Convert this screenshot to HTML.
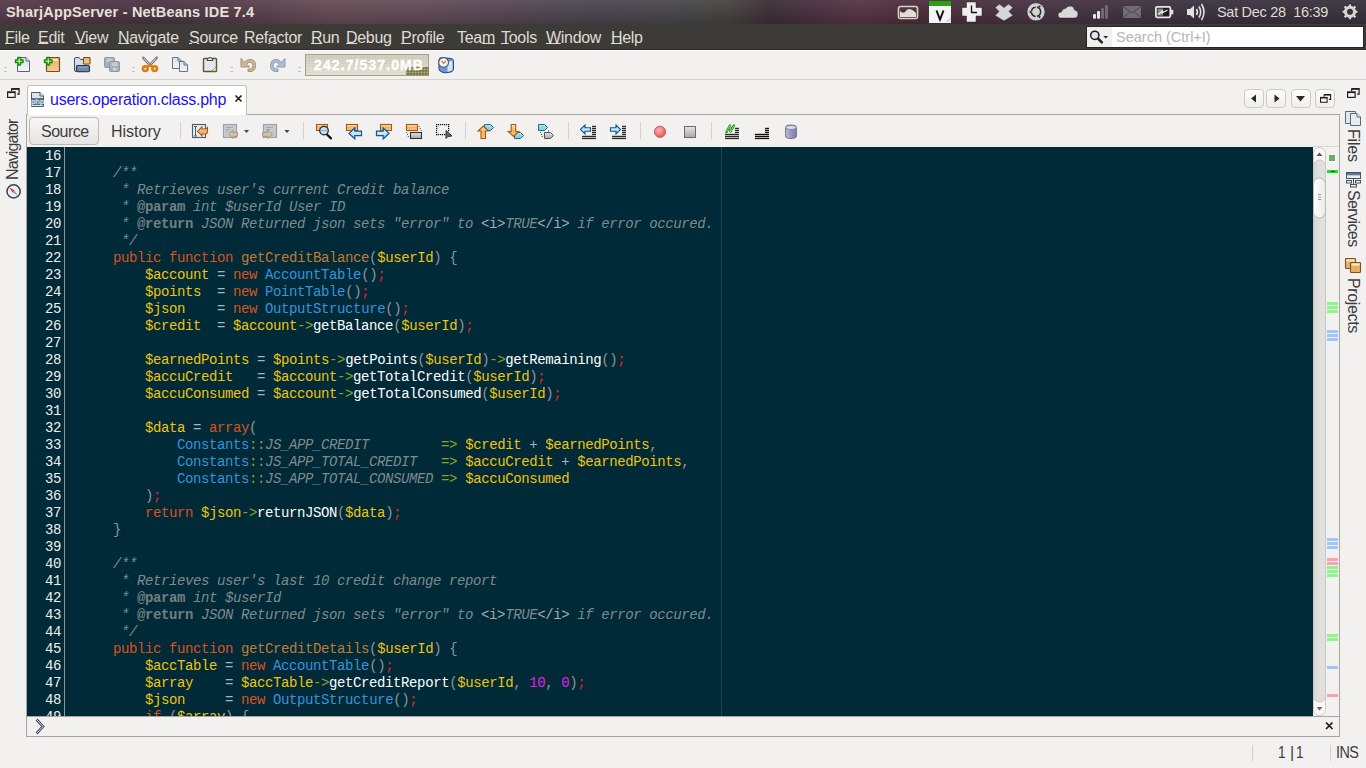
<!DOCTYPE html>
<html><head><meta charset="utf-8">
<style>
*{margin:0;padding:0;box-sizing:border-box}
html,body{width:1366px;height:768px;overflow:hidden;background:#f2f1f0;font-family:"Liberation Sans",sans-serif;position:relative}
.a{position:absolute}
svg{position:absolute;overflow:visible}
#panel{left:0;top:0;width:1366px;height:24px;background:linear-gradient(rgba(255,255,255,0.04),rgba(0,0,0,0.2)),linear-gradient(90deg,#5b3e4d 0px,#553a48 80px,#4d3846 160px,#5a424f 240px,#6a5058 330px,#67505a 420px,#584a57 520px,#4d4a53 600px,#4b4a4b 690px,#4a4644 730px,#3f3139 770px,#4c3442 810px,#5a3747 860px,#50303e 920px,#4a3646 1050px,#3e3542 1200px,#3b3540 1366px)}
#title{left:6px;top:4px;color:#e6e2da;font-weight:bold;font-size:14.5px;letter-spacing:0.2px;white-space:pre}
#clock{left:1217px;top:4px;color:#dfdbd2;font-size:14.5px;letter-spacing:-0.3px;white-space:pre}
#menubar{left:0;top:24px;width:1366px;height:26px;background:#3c3b37;border-bottom:1px solid #2f2e2b}
.mi{position:absolute;top:4.6px;color:#dfdbd2;font-size:16px;letter-spacing:-0.3px;white-space:pre}
.mi u{text-decoration:underline;text-decoration-thickness:1px;text-underline-offset:0px}
#search{left:1086px;top:26px;width:278px;height:22px;background:#fff;border:1px solid #262624}
#search .ib{left:0;top:0;width:25px;height:20px;background:#f0efed}
#search .t{left:29px;top:2px;color:#b9b5ae;font-size:14.5px;white-space:pre}
#toolbar{left:0;top:50px;width:1366px;height:30px;background:#f2f1f0;border-top:1px solid #fbfbfa;border-bottom:1px solid #d6d2cc}
.grip{position:absolute;width:3px;height:5px;border-top:1px solid #c9c5bf;border-bottom:1px solid #c9c5bf}
#mem{left:305px;top:54px;width:124px;height:22px;border:1px solid #a39f8b;background:linear-gradient(90deg,rgba(0,0,0,0.025) 1px,transparent 1px) 0 0/3px 3px,linear-gradient(0deg,rgba(0,0,0,0.025) 1px,transparent 1px) 0 0/3px 3px,linear-gradient(#d2cfbe,#e4e2d4)}
#memfill{left:100px;top:12px;width:23px;height:9px;background-color:#7d7a45;background-image:linear-gradient(90deg,rgba(255,255,255,0.18) 1px,transparent 1px),linear-gradient(0deg,rgba(255,255,255,0.18) 1px,transparent 1px);background-size:3px 3px}
#memt{left:8px;top:2px;-webkit-text-stroke:0.35px #fff;color:#fff;font-weight:bold;font-size:14px;letter-spacing:1.1px;white-space:pre;line-height:16px}
#tab{left:27px;top:85px;width:220px;height:30px;background:#fff;border:1px solid #c4c0b9;border-bottom:none;border-radius:3px 3px 0 0}
#tabt{left:50px;top:91px;color:#2410f4;font-size:16px;letter-spacing:-0.25px;white-space:pre}
.nb{position:absolute;top:89px;width:20px;height:19px;border:1px solid #cfcbc4;border-radius:4px;background:linear-gradient(#fdfdfd,#efeeec)}
#frame{left:26px;top:114px;width:1314px;height:623px;border:1px solid #aaa59e;background:#f2f1f0}
#srcbtn{left:29px;top:117px;width:70px;height:28px;border:1px solid #bdb8b0;border-radius:4px;background:linear-gradient(#f8f7f6,#e6e4e1)}
.et{position:absolute;top:123px;color:#3c3c3c;font-size:16px;letter-spacing:-0.5px;white-space:pre}
.sep{position:absolute;top:122px;width:1px;height:17px;background:#d4d0ca}
#code{left:27px;top:147px;width:1286px;height:569px;background:#002a37;overflow:hidden}
#gut{left:0;top:0;width:38px;height:569px;border-right:1px solid #8f979b}
pre{font-family:"Liberation Mono",monospace;font-size:14px;letter-spacing:-0.4px;line-height:17px;position:absolute;white-space:pre}
#nums{left:0;top:1px;width:34px;text-align:right;color:#eeeeee}
#src{left:54px;top:1px;color:#ccc}
#margin{left:694px;top:0;width:1px;height:569px;background:#2c3f55}
pre i{font-style:normal}
.k{color:#d9521e}.f{color:#c27a34}.v{color:#eec40c}.c{color:#3793dd}.p{color:#8c969a}.s{color:#e0262a}.o{color:#8ea02a}.m{color:#ffffff}.e{color:#a8b4bc}.n{color:#e21fe6}
pre i.cm{color:#7f8a8e;font-style:italic}.cb{color:#737e82;font-weight:bold}.ct{color:#a3aaad}pre i.ci{color:#7f8a8e;font-style:italic}
#sb{left:1313px;top:147px;width:13px;height:569px;background:#f2f1f0}
#stripe{left:1326px;top:147px;width:13px;height:569px;background:#f2f1f0}
.mk{position:absolute;left:1px;width:11px;height:3px}
.g{background:#8cf58c}.b{background:#9ec6f6}.r{background:#fd9fb2}
#bot{left:27px;top:716px;width:1312px;height:20px;border-top:1px solid #aaa59e;background:#f2f1f0}
.st{position:absolute;top:744px;color:#3c3c3c;font-size:16px;letter-spacing:-0.8px;white-space:pre}
.vt{position:absolute;color:#3c3c3c;font-size:16px;white-space:pre;transform-origin:0 0}
</style></head><body>
<div id="panel" class="a"></div>
<div id="title" class="a">SharjAppServer - NetBeans IDE 7.4</div>
<div id="clock" class="a">Sat Dec 28  16:39</div>
<svg class="a" style="left:0;top:0" width="1366" height="24">
<!-- graph -->
<rect x="898.5" y="6.5" width="19" height="12" rx="2" fill="none" stroke="#d9d3c3" stroke-width="1.6"/>
<path d="M900 11 Q903 14 905 12 Q907 9 909 9 Q912 9 916 13 L916 17 L900 17 Z" fill="#e2ddd2"/>
<!-- calendar -->
<rect x="929" y="1" width="22" height="22" fill="#f4f4f4"/>
<rect x="929" y="1" width="22" height="5" fill="#2e9c14"/>
<path d="M936.5 10.5 L940 19.5 L943.5 10.5" fill="none" stroke="#111" stroke-width="2"/>
<path d="M945 22 L951 16 L951 22 Z" fill="#dcdcdc"/>
<!-- plus clock -->
<path d="M966.5 2 H976 V7.5 H982 V16 H976 V22 H966.5 V16 H962 V7.5 H966.5 Z" fill="#efefef" stroke="#222" stroke-width="0.8" stroke-opacity="0.6"/>
<path d="M971.5 5.5 V12.5 H977" fill="none" stroke="#111" stroke-width="1.3"/>
<!-- dropbox -->
<path d="M999.5 4 L1004 7.5 L1008.5 4 L1013 7.5 L1009 11.5 L1013 15.5 L1004 21 L995 15.5 L999 11.5 L995 7.5 Z" fill="#d7d7d7" stroke="#111" stroke-width="0.8" stroke-opacity="0.6"/>
<!-- ubuntu one -->
<circle cx="1036" cy="11.8" r="9" fill="#d2d2d2" stroke="#222" stroke-width="0.8" stroke-opacity="0.6"/>
<circle cx="1036" cy="11.8" r="4.6" fill="none" stroke="#2a2a2a" stroke-width="1.5" stroke-dasharray="6 1.4"/>
<circle cx="1030.5" cy="12" r="1.1" fill="#222"/><circle cx="1039.5" cy="6.5" r="1.1" fill="#222"/><circle cx="1039.5" cy="17" r="1.1" fill="#222"/>
<!-- cloud -->
<path d="M1061 18 Q1058 18 1058 15 Q1058 12 1061.5 12 Q1062 8.5 1065.5 8.5 Q1067 6 1070 6 Q1074 6 1074.5 10 Q1078 10.5 1078 14 Q1078 18 1074.5 18 Z" fill="#d9d9d9" stroke="#111" stroke-width="0.8" stroke-opacity="0.5"/>
<!-- signal -->
<rect x="1093" y="14" width="3" height="4.7" rx="1" fill="#e6e6e6"/>
<rect x="1097" y="11" width="3" height="7.7" rx="1" fill="#e6e6e6"/>
<rect x="1101" y="8" width="3" height="10.7" rx="1" fill="#6e6a70"/>
<rect x="1105" y="5" width="3" height="13.7" rx="1" fill="#6e6a70"/>
<!-- mail -->
<rect x="1123" y="6" width="18" height="12" rx="1" fill="#716c74"/>
<path d="M1123.5 6.5 L1132 13 L1140.5 6.5 M1123.5 17.5 L1129.5 12 M1140.5 17.5 L1134.5 12" fill="none" stroke="#4a454c" stroke-width="1"/>
<!-- battery -->
<rect x="1155.9" y="6.9" width="14.4" height="10.4" rx="1.2" fill="#1e1e1e" stroke="#e8e8e8" stroke-width="1.8"/>
<rect x="1171" y="9.8" width="2.3" height="4.6" fill="#dcdcdc"/>
<rect x="1157.5" y="8.6" width="5.5" height="7" fill="#8a8a8a"/>
<path d="M1158 14.5 L1162.5 11 L1162.5 12.8 L1167.5 10" fill="none" stroke="#f0f0f0" stroke-width="1.2"/>
<!-- volume -->
<path d="M1187 9 H1190 L1194 5.5 V18.5 L1190 15 H1187 Z" fill="#e2e2e2"/>
<path d="M1196.5 9 Q1198.3 12 1196.5 15 M1199 6.5 Q1202.3 12 1199 17.5 M1201.5 4 Q1206.5 12 1201.5 20" fill="none" stroke="#e2e2e2" stroke-width="1.6"/>
<path d="M1356.12 10.32 L1357.88 10.42 L1357.88 13.18 L1356.12 13.28 L1355.82 14.21 L1355.38 15.08 L1356.55 16.40 L1354.60 18.35 L1353.28 17.18 L1352.41 17.62 L1351.48 17.92 L1351.38 19.68 L1348.62 19.68 L1348.52 17.92 L1347.59 17.62 L1346.72 17.18 L1345.40 18.35 L1343.45 16.40 L1344.62 15.08 L1344.18 14.21 L1343.88 13.28 L1342.12 13.18 L1342.12 10.42 L1343.88 10.32 L1344.18 9.39 L1344.62 8.52 L1343.45 7.20 L1345.40 5.25 L1346.72 6.42 L1347.59 5.98 L1348.52 5.68 L1348.62 3.92 L1351.38 3.92 L1351.48 5.68 L1352.41 5.98 L1353.28 6.42 L1354.60 5.25 L1356.55 7.20 L1355.38 8.52 L1355.82 9.39 Z M1347.30 11.80 a2.70 2.70 0 1 0 5.40 0 a2.70 2.70 0 1 0 -5.40 0 Z" fill="#d6d6d6" fill-rule="evenodd" stroke="#111" stroke-width="0.8" stroke-opacity="0.7"/>
</svg>
<div id="menubar" class="a">
<span class="mi" style="left:5px"><u>F</u>ile</span>
<span class="mi" style="left:38px"><u>E</u>dit</span>
<span class="mi" style="left:75px"><u>V</u>iew</span>
<span class="mi" style="left:118px"><u>N</u>avigate</span>
<span class="mi" style="left:189px"><u>S</u>ource</span>
<span class="mi" style="left:244px">Ref<u>a</u>ctor</span>
<span class="mi" style="left:311px"><u>R</u>un</span>
<span class="mi" style="left:346px"><u>D</u>ebug</span>
<span class="mi" style="left:401px"><u>P</u>rofile</span>
<span class="mi" style="left:457px">Tea<u>m</u></span>
<span class="mi" style="left:501px"><u>T</u>ools</span>
<span class="mi" style="left:546px"><u>W</u>indow</span>
<span class="mi" style="left:611px"><u>H</u>elp</span>
</div>
<div id="search" class="a"><div class="ib a"></div><div class="t a">Search (Ctrl+I)</div></div>
<svg class="a" style="left:1087px;top:27px" width="24" height="20">
<path d="M10.8 11.3 L14.8 15.3" stroke="#1e1e1e" stroke-width="2.6" stroke-linecap="round"/>
<circle cx="7.8" cy="8.3" r="4.1" fill="#dde6ee" stroke="#1e1e1e" stroke-width="1.5"/>
<path d="M16.5 9 H21 L18.75 11.5 Z" fill="#1e1e1e"/>
</svg>
<div id="toolbar" class="a"></div>
<div class="grip" style="left:4px;top:67px"></div>
<div class="grip" style="left:132px;top:67px"></div>
<div class="grip" style="left:230px;top:67px"></div>
<div class="grip" style="left:298px;top:67px"></div>
<div id="mem" class="a"><div id="memfill" class="a"></div><div id="memt" class="a">242.7/537.0MB</div></div>
<svg class="a" style="left:0;top:49px" width="470" height="31">
<defs>
<linearGradient id="gdoc" x1="0" y1="0" x2="0" y2="1"><stop offset="0" stop-color="#d8e2ee"/><stop offset="1" stop-color="#f2f5f9"/></linearGradient>
<linearGradient id="gor" x1="0" y1="0" x2="0" y2="1"><stop offset="0" stop-color="#e9ad62"/><stop offset="1" stop-color="#f6cf98"/></linearGradient>
<linearGradient id="gpl" x1="0" y1="0" x2="0" y2="1"><stop offset="0" stop-color="#e6ffd0"/><stop offset="1" stop-color="#a8f070"/></linearGradient>
</defs>
<g transform="translate(0,-49)">
<!-- new file -->
<path d="M17.5 57.5 H26 L29.5 61 V71.5 H17.5 Z" fill="url(#gdoc)" stroke="#5b6673" stroke-width="1"/>
<path d="M26 57.5 V61 H29.5" fill="#eef3f8" stroke="#5b6673" stroke-width="1"/>
<path d="M18 57.5 H20.5 V60 H23 V62.5 H20.5 V65 H18 V62.5 H15.5 V60 H18 Z" fill="url(#gpl)" stroke="#128a06" stroke-width="1.4" stroke-linejoin="round"/>
<!-- new project -->
<rect x="46.5" y="57.5" width="13" height="14" rx="0.8" fill="url(#gor)" stroke="#73501f" stroke-width="1.2"/>
<rect x="48" y="59" width="10" height="2" fill="#fbe6c4"/>
<path d="M47 57.5 H49.5 V60 H52 V62.5 H49.5 V65 H47 V62.5 H44.5 V60 H47 Z" fill="url(#gpl)" stroke="#128a06" stroke-width="1.4" stroke-linejoin="round"/>
<!-- open project -->
<path d="M74.5 59 Q74.5 57.5 76 57.5 H79 L80.5 59.5 H86 V71.5 H76 Q74.5 71.5 74.5 70 Z" fill="#d3dee9" stroke="#3f4d5c" stroke-width="1"/>
<rect x="76.5" y="65.5" width="13" height="6.3" rx="1.2" fill="#6d8aa8" stroke="#23364a" stroke-width="1.1"/><path d="M78 67.2 H88" stroke="#9ab2c8" stroke-width="0.8"/>
<rect x="83.5" y="57.5" width="6.5" height="6.5" rx="0.8" fill="url(#gor)" stroke="#73501f" stroke-width="1.1"/>
<!-- save all disabled -->
<rect x="104.5" y="57.5" width="10" height="10" rx="1" fill="#a6b0b8" stroke="#8e98a0" stroke-width="1"/>
<rect x="106.5" y="58.5" width="6" height="3.5" fill="#c8ccd0"/>
<rect x="109.5" y="61.5" width="10" height="10" rx="1" fill="#a6b0b8" stroke="#8e98a0" stroke-width="1"/>
<rect x="111.5" y="62.5" width="6" height="3.5" fill="#c8ccd0"/>
<rect x="113" y="68" width="3.5" height="2.5" fill="#d0d4d8"/>
<!-- scissors -->
<path d="M143.3 57.8 L150.5 65.5 M156.7 57.8 L149.5 65.5" stroke="#74797e" stroke-width="2.6" stroke-linecap="round"/>
<path d="M143.8 58.2 L150.3 65.2 M156.2 58.2 L149.7 65.2" stroke="#e4e6e8" stroke-width="0.9"/>
<path d="M148 66.5 L150 64.2 L152 66.5" fill="none" stroke="#e27c12" stroke-width="2.4"/>
<circle cx="145.3" cy="68.6" r="2.3" fill="none" stroke="#e27c12" stroke-width="2.8"/>
<circle cx="154.7" cy="68.6" r="2.3" fill="none" stroke="#e27c12" stroke-width="2.8"/>
<circle cx="145.3" cy="68.6" r="0.9" fill="#f6e8d8"/>
<circle cx="154.7" cy="68.6" r="0.9" fill="#f6e8d8"/>
<!-- copy -->
<path d="M172.5 57.5 H178 L181.5 61 V68.5 H172.5 Z" fill="url(#gdoc)" stroke="#687482" stroke-width="1"/>
<path d="M178 57.5 V61 H181.5" fill="none" stroke="#687482" stroke-width="1"/>
<path d="M179.5 61.5 H184 L187.5 65 V71.5 H179.5 Z" fill="url(#gdoc)" stroke="#687482" stroke-width="1"/>
<path d="M184 61.5 V65 H187.5" fill="none" stroke="#687482" stroke-width="1"/>
<!-- paste -->
<rect x="203.5" y="58.5" width="13" height="13" rx="0.8" fill="#dfe8f2" stroke="#65551f" stroke-width="1.4"/>
<path d="M207 60.5 Q207 58 210 57.5 Q213 58 213 60.5 Z" fill="#e8eaec" stroke="#333" stroke-width="0.9"/>
<path d="M212 71 L216 67 V71 Z" fill="#f8f8f8" stroke="#8a7a3a" stroke-width="0.7"/>
<!-- undo -->
<path d="M241 58.5 L241 67 L249.5 67 L246.8 64.3 Q248 62 250 62 Q253 62.5 253 65.5 Q253 68.5 250 69 L248 69 L248 71.5 L250 71.5 Q255.5 71.5 255.5 65.5 Q255.5 59.5 250 59.5 Q246.5 59.5 244.8 62.3 Z" fill="#cdb996" stroke="#a6937a" stroke-width="1"/>
<!-- redo -->
<path d="M285 58.5 L285 67 L276.5 67 L279.2 64.3 Q278 62 276 62 Q273 62.5 273 65.5 Q273 68.5 276 69 L278 69 L278 71.5 L276 71.5 Q270.5 71.5 270.5 65.5 Q270.5 59.5 276 59.5 Q279.5 59.5 281.2 62.3 Z" fill="#abbfcf" stroke="#8aa0b2" stroke-width="1"/>
<!-- profile -->
<path d="M439 60 Q439 57.5 442 57.5 L451 58.5 Q453.5 59 453.5 61 V69 Q453.5 71 451 72 L446 72.8 Q444 73 442 72 L440 71 Q439 70.5 439 69 Z" fill="#6f94d8" stroke="#24497e" stroke-width="1"/>
<path d="M447.5 62 L452.5 60.5 V70 L447.5 72 Z" fill="#d8e4ee"/>
<circle cx="443.6" cy="62.5" r="4.9" fill="#f0f6fc" stroke="#4a5a6a" stroke-width="1.1"/>
<path d="M441.5 61 L443.6 63.3 L445.8 61" fill="none" stroke="#e87a2a" stroke-width="1.3"/>
</g>
</svg>
<svg class="a" style="left:0;top:0" width="1366" height="768">
<path d="M11.6 88.6 h7.5 v5.5 h-2" fill="none" stroke="#1e1e1e" stroke-width="1.2"/>
<rect x="7.6" y="91.9" width="7.5" height="5.5" fill="#f6f6f6" stroke="#1e1e1e" stroke-width="1.2"/>
<rect x="7.6" y="91.9" width="7.5" height="1.2" fill="#1e1e1e"/>
<rect x="11.6" y="88.6" width="7.5" height="1.2" fill="#1e1e1e"/>
<path d="M11.6 88.6 v2.5" stroke="#1e1e1e" stroke-width="1.2"/><path d="M1351.6 88.6 h7.5 v5.5 h-2" fill="none" stroke="#1e1e1e" stroke-width="1.2"/>
<rect x="1347.6" y="91.9" width="7.5" height="5.5" fill="#f6f6f6" stroke="#1e1e1e" stroke-width="1.2"/>
<rect x="1347.6" y="91.9" width="7.5" height="1.2" fill="#1e1e1e"/>
<rect x="1351.6" y="88.6" width="7.5" height="1.2" fill="#1e1e1e"/>
<path d="M1351.6 88.6 v2.5" stroke="#1e1e1e" stroke-width="1.2"/>
<!-- compass -->
<circle cx="13.6" cy="191.4" r="6.6" fill="#e9f0f7" stroke="#36424e" stroke-width="1.5"/>
<path d="M9.3 187.2 L14.6 190.4 L12.5 192.5 Z" fill="#d83a3a"/>
<path d="M18 195.8 L14.6 190.4 L12.5 192.5 Z" fill="#9aa0a6"/>
<!-- files -->
<path d="M1345.5 111.5 H1355.5 V123.5 H1345.5 Z" fill="#dfe7f0" stroke="#5c6874" stroke-width="1"/>
<path d="M1350.5 113.5 H1357 L1360.5 117 V125.5 H1350.5 Z" fill="#e4ebf3" stroke="#5c6874" stroke-width="1"/>
<path d="M1357 113.5 V117 H1360.5" fill="#f4f7fa" stroke="#5c6874" stroke-width="1"/>
<!-- services -->
<rect x="1346.5" y="172.5" width="14" height="6" fill="#e8eef5" stroke="#46525e" stroke-width="1"/>
<rect x="1347" y="173" width="13" height="2.3" fill="#5a7a98"/>
<path d="M1353.5 179 V184" stroke="#46525e" stroke-width="1"/>
<rect x="1346.5" y="180.5" width="5" height="2.5" fill="#e8eef5" stroke="#46525e" stroke-width="1"/>
<rect x="1355.5" y="180.5" width="5" height="2.5" fill="#e8eef5" stroke="#46525e" stroke-width="1"/>
<rect x="1350.5" y="184.5" width="6" height="2.5" fill="#e8eef5" stroke="#46525e" stroke-width="1"/>
<!-- projects -->
<rect x="1345.5" y="258.5" width="10" height="10" rx="0.8" fill="#e8b066" stroke="#7a5422" stroke-width="1.1"/>
<rect x="1346.5" y="259.5" width="8" height="2" fill="#fbe8cc"/>
<rect x="1350.5" y="262.5" width="10" height="10" rx="0.8" fill="#e8b066" stroke="#7a5422" stroke-width="1.1"/>
<rect x="1351.5" y="263.5" width="8" height="2" fill="#fbe8cc"/>
</svg>
<div class="vt" style="left:4px;top:180px;letter-spacing:-0.9px;transform:rotate(-90deg)">Navigator</div>
<div class="vt" style="left:1362px;top:129px;letter-spacing:-0.2px;transform:rotate(90deg)">Files</div>
<div class="vt" style="left:1362px;top:190px;letter-spacing:-0.6px;transform:rotate(90deg)">Services</div>
<div class="vt" style="left:1362px;top:278px;letter-spacing:-0.35px;transform:rotate(90deg)">Projects</div>

<div id="frame" class="a"></div>
<div id="tab" class="a"></div>
<div id="tabt" class="a">users.operation.class.php</div>
<svg class="a" style="left:0;top:0" width="260" height="120">
<path d="M31.5 92.5 H40 L43.5 96 V106.5 H31.5 Z" fill="#dbe5ef" stroke="#4d5966" stroke-width="1"/>
<path d="M40 92.5 V96 H43.5" fill="#f0f4f8" stroke="#4d5966" stroke-width="1"/>
<rect x="32" y="98" width="11" height="7" fill="#5a7088"/>
<text x="37.5" y="104" font-family="Liberation Sans" font-size="7.5" font-weight="bold" fill="#cfe6fa" text-anchor="middle" letter-spacing="-0.3">php</text>
<path d="M235.5 95.5 L241.5 101.5 M241.5 95.5 L235.5 101.5" stroke="#1a1a1a" stroke-width="1.6"/>
</svg>
<div class="nb" style="left:1244px"></div>
<div class="nb" style="left:1266px"></div>
<div class="nb" style="left:1291px"></div>
<div class="nb" style="left:1315px"></div>
<svg class="a" style="left:1240px;top:85px" width="100" height="30">
<g transform="translate(-1240,-85)">
<path d="M1251 98.5 L1256 94.5 V102.5 Z" fill="#2a2a2a"/>
<path d="M1279.5 98.5 L1274.5 94.5 V102.5 Z" fill="#2a2a2a"/>
<path d="M1296 96 H1305 L1300.5 101.5 Z" fill="#2a2a2a"/>
<g transform="translate(1320,94) scale(0.88)"><path d="M4.6 0.6 h7.5 v5.5 h-2" fill="none" stroke="#1e1e1e" stroke-width="1.2"/>
<rect x="0.6" y="3.9" width="7.5" height="5.5" fill="#f6f6f6" stroke="#1e1e1e" stroke-width="1.2"/>
<rect x="0.6" y="3.9" width="7.5" height="1.2" fill="#1e1e1e"/>
<rect x="4.6" y="0.6" width="7.5" height="1.2" fill="#1e1e1e"/>
<path d="M4.6 0.6 v2.5" stroke="#1e1e1e" stroke-width="1.2"/></g>
</g></svg>
<div id="srcbtn" class="a"></div>
<div class="et" style="left:41px">Source</div>
<div class="et" style="left:111px;letter-spacing:0">History</div>
<div class="sep" style="left:180px"></div>
<div class="sep" style="left:303px"></div>
<div class="sep" style="left:465px"></div>
<div class="sep" style="left:568px"></div>
<div class="sep" style="left:640px"></div>
<div class="sep" style="left:711px"></div>
<svg class="a" style="left:180px;top:115px" width="630" height="32">
<defs>
<linearGradient id="gor2" x1="0" y1="0" x2="0" y2="1"><stop offset="0" stop-color="#fde7c6"/><stop offset="0.5" stop-color="#f0b068"/><stop offset="1" stop-color="#f7c78a"/></linearGradient>
<linearGradient id="gcy" x1="0" y1="0" x2="0" y2="1"><stop offset="0" stop-color="#a8e4f4"/><stop offset="1" stop-color="#72cce8"/></linearGradient>
<linearGradient id="gbl" x1="0" y1="0" x2="0" y2="1"><stop offset="0" stop-color="#e8f4fc"/><stop offset="1" stop-color="#a8d4f4"/></linearGradient>
<linearGradient id="ggr" x1="0" y1="0" x2="0" y2="1"><stop offset="0" stop-color="#e4e4e4"/><stop offset="1" stop-color="#a8a8a8"/></linearGradient>
<linearGradient id="gdb" x1="0" y1="0" x2="1" y2="0"><stop offset="0" stop-color="#b8b8dc"/><stop offset="0.5" stop-color="#9896c4"/><stop offset="1" stop-color="#7a78b0"/></linearGradient>
<radialGradient id="grd" cx="0.4" cy="0.35" r="0.7"><stop offset="0" stop-color="#ffb0b0"/><stop offset="1" stop-color="#e85050"/></radialGradient>
</defs>
<g transform="translate(-180,-115)">
<!-- last edit -->
<rect x="192.5" y="124.5" width="13" height="13" fill="#e2eef9" stroke="#4f5b66" stroke-width="1.1"/>
<path d="M194 126.5 H197 M195.5 126.5 V136 M194 136 H197" stroke="#4f5b66" stroke-width="1"/>
<path d="M197.5 131.3 L202 126.8 V129 H206 L207.5 127.5 V132.5 L206 134 H202 V135.8 Z" fill="url(#gor2)" stroke="#a85a08" stroke-width="1.1"/>
<!-- back (disabled) -->
<rect x="223.5" y="124.5" width="13" height="13" fill="#c6cacf" stroke="#9aa1a8" stroke-width="1.1"/>
<path d="M226 127.5 H233 M226 129.5 H230 M226 131.5 H227.5" stroke="#a0a6ac" stroke-width="1"/>
<path d="M228.5 134.3 L233 130 V132.3 H237.5 V136.3 H233 V138.6 Z" fill="#d2c4aa" stroke="#a89678" stroke-width="1"/>
<path d="M244 130 H249 L246.5 133 Z" fill="#34465a"/>
<!-- forward (disabled) -->
<rect x="263.5" y="124.5" width="13" height="13" fill="#c6cacf" stroke="#9aa1a8" stroke-width="1.1"/>
<path d="M266 127.5 H273 M266 129.5 H270 M266 131.5 H267.5" stroke="#a0a6ac" stroke-width="1"/>
<path d="M272.5 134.3 L268 130 V132.3 H262.5 V136.3 H268 V138.6 Z" fill="#d2c4aa" stroke="#a89678" stroke-width="1"/>
<path d="M284.5 130 H289.5 L287 133 Z" fill="#34465a"/>
<!-- find -->
<rect x="316.5" y="124.5" width="11" height="6" fill="url(#gor2)" stroke="#a85a08" stroke-width="1.1"/>
<path d="M327 134.5 L331 138.3" stroke="#111" stroke-width="2.3" stroke-linecap="round"/>
<circle cx="324" cy="130.6" r="4.3" fill="#c4def6" stroke="#222" stroke-width="1.2"/>
<path d="M320.5 130.6 H327.5" stroke="#9aa6b0" stroke-width="0.9"/>
<!-- find prev -->
<rect x="346.5" y="124.5" width="11" height="6" fill="url(#gor2)" stroke="#a85a08" stroke-width="1.1"/>
<path d="M349 133.4 L354.8 128 V131.2 H361.5 V135.6 H354.8 V138.8 Z" fill="url(#gbl)" stroke="#0a56a0" stroke-width="1.2"/>
<!-- find next -->
<rect x="380.5" y="124.5" width="11" height="6" fill="url(#gor2)" stroke="#a85a08" stroke-width="1.1"/>
<path d="M389 133.4 L383.2 128 V131.2 H376.5 V135.6 H383.2 V138.8 Z" fill="url(#gbl)" stroke="#0a56a0" stroke-width="1.2"/>
<!-- toggle highlight -->
<rect x="406.5" y="124.5" width="11" height="6" fill="url(#gor2)" stroke="#a85a08" stroke-width="1.1"/>
<rect x="410.5" y="132.5" width="11" height="6" fill="url(#ggr)" stroke="#333" stroke-width="1.1"/>
<path d="M406.5 132 L408.5 137 M419 126 L421.5 131" stroke="#222" stroke-width="0.9" stroke-dasharray="1 1.2"/>
<!-- rect selection -->
<rect x="436" y="124" width="1.2" height="1.2" fill="#111"/><rect x="438" y="124" width="1.2" height="1.2" fill="#111"/><rect x="440" y="124" width="1.2" height="1.2" fill="#111"/><rect x="442" y="124" width="1.2" height="1.2" fill="#111"/><rect x="444" y="124" width="1.2" height="1.2" fill="#111"/><rect x="446" y="124" width="1.2" height="1.2" fill="#111"/><rect x="448" y="124" width="1.2" height="1.2" fill="#111"/><rect x="436" y="134" width="1.2" height="1.2" fill="#111"/><rect x="438" y="134" width="1.2" height="1.2" fill="#111"/><rect x="440" y="134" width="1.2" height="1.2" fill="#111"/><rect x="442" y="134" width="1.2" height="1.2" fill="#111"/><rect x="444" y="134" width="1.2" height="1.2" fill="#111"/><rect x="446" y="134" width="1.2" height="1.2" fill="#111"/><rect x="436" y="124" width="1.2" height="1.2" fill="#111"/><rect x="436" y="126" width="1.2" height="1.2" fill="#111"/><rect x="436" y="128" width="1.2" height="1.2" fill="#111"/><rect x="436" y="130" width="1.2" height="1.2" fill="#111"/><rect x="436" y="132" width="1.2" height="1.2" fill="#111"/><rect x="436" y="134" width="1.2" height="1.2" fill="#111"/><rect x="448" y="124" width="1.2" height="1.2" fill="#111"/><rect x="448" y="126" width="1.2" height="1.2" fill="#111"/><rect x="448" y="128" width="1.2" height="1.2" fill="#111"/><rect x="448" y="130" width="1.2" height="1.2" fill="#111"/>
<path d="M446 130.5 V138.5 L448 136.5 L452 136 Z" fill="#5a6a78" stroke="#1e2a36" stroke-width="0.9"/>
<!-- prev bookmark -->
<path d="M484.5 124.5 H490.5 L493.5 127.5 L490.5 130.5 H484.5 Z" fill="url(#gcy)" stroke="#2e6a78" stroke-width="1"/>
<path d="M483.3 126 L488.5 131 H485.5 V138.5 H481 V131 H478 Z" fill="url(#gor2)" stroke="#a85a08" stroke-width="1.1"/>
<!-- next bookmark -->
<path d="M514.5 132.5 H520.5 L523.5 135.5 L520.5 138.5 H514.5 Z" fill="url(#gcy)" stroke="#2e6a78" stroke-width="1"/>
<path d="M513.5 136.5 L518.7 131.5 H515.7 V124.5 H511.2 V131.5 H508.2 Z" fill="url(#gor2)" stroke="#a85a08" stroke-width="1.1"/>
<!-- toggle bookmark -->
<path d="M538.5 124.5 H544.5 L547.5 127.5 L544.5 130.5 H538.5 Z" fill="url(#gcy)" stroke="#2e6a78" stroke-width="1"/>
<path d="M544.5 132.5 H550.5 L553.5 135.5 L550.5 138.5 H544.5 Z" fill="url(#ggr)" stroke="#555" stroke-width="1"/>
<path d="M540.5 132 L542.5 137 M548.5 130.5 V132" stroke="#222" stroke-width="0.9" stroke-dasharray="1 1.2"/>
<!-- shift left -->
<path d="M580.5 129.5 L585 125 V127.8 H590.5 V131.3 H585 V134 Z" fill="url(#gbl)" stroke="#0a5a90" stroke-width="1.1"/>
<rect x="592" y="125.8" width="4" height="1.3" fill="#2a2a2a"/><rect x="592" y="127.8" width="4" height="1.3" fill="#2a2a2a"/><rect x="592" y="129.8" width="4" height="1.3" fill="#2a2a2a"/><rect x="592" y="131.8" width="4" height="1.3" fill="#2a2a2a"/><rect x="592" y="133.8" width="4" height="1.3" fill="#2a2a2a"/><rect x="582" y="135.8" width="14" height="1.3" fill="#2a2a2a"/><rect x="582" y="137.8" width="14" height="1.3" fill="#2a2a2a"/>
<!-- shift right -->
<path d="M620.5 129.5 L616 125 V127.8 H610.5 V131.3 H616 V134 Z" fill="url(#gbl)" stroke="#0a5a90" stroke-width="1.1"/>
<rect x="622" y="125.8" width="4" height="1.3" fill="#2a2a2a"/><rect x="622" y="127.8" width="4" height="1.3" fill="#2a2a2a"/><rect x="622" y="129.8" width="4" height="1.3" fill="#2a2a2a"/><rect x="622" y="131.8" width="4" height="1.3" fill="#2a2a2a"/><rect x="622" y="133.8" width="4" height="1.3" fill="#2a2a2a"/><rect x="612" y="135.8" width="14" height="1.3" fill="#2a2a2a"/><rect x="612" y="137.8" width="14" height="1.3" fill="#2a2a2a"/>
<!-- record -->
<circle cx="660" cy="131.8" r="5.6" fill="url(#grd)" stroke="#c84848" stroke-width="0.8"/>
<!-- stop -->
<rect x="684.5" y="126.5" width="11" height="11" fill="url(#ggr)" stroke="#6a6a6a" stroke-width="1"/>
<!-- format N -->
<path d="M726.5 132 L730 125.5 L730.5 131.5 L734 125.5" fill="none" stroke="#119010" stroke-width="2.4" stroke-linejoin="round" stroke-linecap="round"/>
<path d="M726.5 132 L730 125.5 L730.5 131.5 L734 125.5" fill="none" stroke="#b4f098" stroke-width="0.8" stroke-linejoin="round"/>
<rect x="735" y="127.8" width="4" height="1.3" fill="#2a2a2a"/><rect x="735" y="129.8" width="4" height="1.3" fill="#2a2a2a"/><rect x="735" y="131.8" width="4" height="1.3" fill="#2a2a2a"/><rect x="725" y="133.8" width="14" height="1.3" fill="#2a2a2a"/><rect x="725" y="135.8" width="14" height="1.3" fill="#2a2a2a"/><rect x="725" y="137.8" width="14" height="1.3" fill="#2a2a2a"/>
<!-- lines -->
<rect x="765" y="127.8" width="4" height="1.3" fill="#111"/><rect x="765" y="129.8" width="4" height="1.3" fill="#111"/><rect x="765" y="131.8" width="4" height="1.3" fill="#111"/><rect x="755" y="133.8" width="14" height="1.3" fill="#111"/><rect x="755" y="135.8" width="14" height="1.3" fill="#111"/><rect x="755" y="137.8" width="14" height="1.3" fill="#111"/>
<!-- db -->
<path d="M785.5 127.5 Q785.5 125 791 125 Q796.5 125 796.5 127.5 V136 Q796.5 138.5 791 138.5 Q785.5 138.5 785.5 136 Z" fill="url(#gdb)" stroke="#7a7a8a" stroke-width="1"/>
<ellipse cx="791" cy="127.5" rx="5.2" ry="2" fill="#dcdcf0" stroke="#7a7a8a" stroke-width="0.8"/>
</g></svg>
<div id="code" class="a">
<div id="gut" class="a"></div>
<div id="margin" class="a"></div>
<pre id="nums">16
17
18
19
20
21
22
23
24
25
26
27
28
29
30
31
32
33
34
35
36
37
38
39
40
41
42
43
44
45
46
47
48
49</pre>
<pre id="src">

    <i class="cm">/**</i>
    <i class="cm"> * Retrieves user&#x27;s current Credit balance</i>
    <i class="cm"> * </i><i class="cb">@param</i><i class="cm"> int $userId User ID</i>
    <i class="cm"> * </i><i class="cb">@return</i><i class="cm"> JSON Returned json sets &quot;error&quot; to </i><i class="ct">&lt;i&gt;</i><i class="cm">TRUE</i><i class="ct">&lt;/i&gt;</i><i class="cm"> if error occured.</i>
    <i class="cm"> */</i>
    <i class="k">public</i> <i class="k">function</i> <i class="f">getCreditBalance</i><i class="p">(</i><i class="v">$userId</i><i class="p">)</i> <i class="p">{</i>
        <i class="v">$account</i> <i class="e">=</i> <i class="k">new</i> <i class="c">AccountTable</i><i class="p">()</i><i class="s">;</i>
        <i class="v">$points</i>  <i class="e">=</i> <i class="k">new</i> <i class="c">PointTable</i><i class="p">()</i><i class="s">;</i>
        <i class="v">$json</i>    <i class="e">=</i> <i class="k">new</i> <i class="c">OutputStructure</i><i class="p">()</i><i class="s">;</i>
        <i class="v">$credit</i>  <i class="e">=</i> <i class="v">$account</i><i class="o">-&gt;</i><i class="m">getBalance</i><i class="p">(</i><i class="v">$userId</i><i class="p">)</i><i class="s">;</i>

        <i class="v">$earnedPoints</i> <i class="e">=</i> <i class="v">$points</i><i class="o">-&gt;</i><i class="m">getPoints</i><i class="p">(</i><i class="v">$userId</i><i class="p">)</i><i class="o">-&gt;</i><i class="m">getRemaining</i><i class="p">()</i><i class="s">;</i>
        <i class="v">$accuCredit</i>   <i class="e">=</i> <i class="v">$account</i><i class="o">-&gt;</i><i class="m">getTotalCredit</i><i class="p">(</i><i class="v">$userId</i><i class="p">)</i><i class="s">;</i>
        <i class="v">$accuConsumed</i> <i class="e">=</i> <i class="v">$account</i><i class="o">-&gt;</i><i class="m">getTotalConsumed</i><i class="p">(</i><i class="v">$userId</i><i class="p">)</i><i class="s">;</i>

        <i class="v">$data</i> <i class="e">=</i> <i class="k">array</i><i class="p">(</i>
            <i class="c">Constants</i><i class="o">::</i><i class="ci">JS_APP_CREDIT</i>         <i class="o">=&gt;</i> <i class="v">$credit</i> <i class="e">+</i> <i class="v">$earnedPoints</i><i class="p">,</i>
            <i class="c">Constants</i><i class="o">::</i><i class="ci">JS_APP_TOTAL_CREDIT</i>   <i class="o">=&gt;</i> <i class="v">$accuCredit</i> <i class="e">+</i> <i class="v">$earnedPoints</i><i class="p">,</i>
            <i class="c">Constants</i><i class="o">::</i><i class="ci">JS_APP_TOTAL_CONSUMED</i> <i class="o">=&gt;</i> <i class="v">$accuConsumed</i>
        <i class="p">)</i><i class="s">;</i>
        <i class="k">return</i> <i class="v">$json</i><i class="o">-&gt;</i><i class="m">returnJSON</i><i class="p">(</i><i class="v">$data</i><i class="p">)</i><i class="s">;</i>
    <i class="p">}</i>

    <i class="cm">/**</i>
    <i class="cm"> * Retrieves user&#x27;s last 10 credit change report</i>
    <i class="cm"> * </i><i class="cb">@param</i><i class="cm"> int $userId</i>
    <i class="cm"> * </i><i class="cb">@return</i><i class="cm"> JSON Returned json sets &quot;error&quot; to </i><i class="ct">&lt;i&gt;</i><i class="cm">TRUE</i><i class="ct">&lt;/i&gt;</i><i class="cm"> if error occured.</i>
    <i class="cm"> */</i>
    <i class="k">public</i> <i class="k">function</i> <i class="f">getCreditDetails</i><i class="p">(</i><i class="v">$userId</i><i class="p">)</i> <i class="p">{</i>
        <i class="v">$accTable</i> <i class="e">=</i> <i class="k">new</i> <i class="c">AccountTable</i><i class="p">()</i><i class="s">;</i>
        <i class="v">$array</i>    <i class="e">=</i> <i class="v">$accTable</i><i class="o">-&gt;</i><i class="m">getCreditReport</i><i class="p">(</i><i class="v">$userId</i><i class="p">,</i> <i class="n">10</i><i class="p">,</i> <i class="n">0</i><i class="p">)</i><i class="s">;</i>
        <i class="v">$json</i>     <i class="e">=</i> <i class="k">new</i> <i class="c">OutputStructure</i><i class="p">()</i><i class="s">;</i>
        <i class="k">if</i> <i class="p">(</i><i class="v">$array</i><i class="p">)</i> <i class="p">{</i></pre>
</div>
<div id="sb" class="a"></div>
<div class="a" style="left:1313px;top:146px;width:26px;height:1px;background:#dad6d1"></div>
<svg class="a" style="left:1313px;top:147px" width="13" height="569">
<defs>
<linearGradient id="gtr" x1="0" y1="0" x2="1" y2="0"><stop offset="0" stop-color="#d8d6d3"/><stop offset="0.5" stop-color="#e0dfdc"/><stop offset="1" stop-color="#e2e1df"/></linearGradient>
<linearGradient id="gth" x1="0" y1="0" x2="1" y2="0"><stop offset="0" stop-color="#ffffff"/><stop offset="1" stop-color="#ebeae8"/></linearGradient>
</defs>
<rect x="0.5" y="0.5" width="12" height="568" rx="6" fill="#f8f8f7" stroke="#cfcbc5" stroke-width="1"/>
<rect x="0.5" y="13" width="12" height="542" rx="6" fill="url(#gtr)" stroke="#cac6c1" stroke-width="1"/>
<rect x="0.5" y="31" width="12" height="40" rx="6" fill="url(#gth)" stroke="#bdb9b3" stroke-width="1"/>
<path d="M5 47.5 H8 M5 50 H8 M5 52.5 H8" stroke="#8a8a8a" stroke-width="0.9"/>
<path d="M3.5 9 L6.5 5.5 L9.5 9 Z" fill="#555"/>
<path d="M3.5 560 L6.5 563.5 L9.5 560 Z" fill="#666"/>
</svg>
<div id="stripe" class="a">
<div class="mk g" style="top:155px"></div>
<div class="mk g" style="top:159px"></div>
<div class="mk g" style="top:163px"></div>
<div class="mk b" style="top:183px"></div>
<div class="mk b" style="top:187px"></div>
<div class="mk b" style="top:191px"></div>
<div class="mk b" style="top:391px"></div>
<div class="mk b" style="top:395px"></div>
<div class="mk b" style="top:399px"></div>
<div class="mk r" style="top:411px"></div>
<div class="mk r" style="top:415px"></div>
<div class="mk g" style="top:419px"></div>
<div class="mk g" style="top:423px"></div>
<div class="mk g" style="top:427px"></div>
<div class="mk g" style="top:487px"></div>
<div class="mk g" style="top:491px"></div>
<div class="mk b" style="top:519px"></div>
<div class="mk r" style="top:547px"></div>
<div class="a" style="left:2px;top:7px;width:8px;height:8px;background:#5fb25f;border:1px solid #fff"></div>
<div class="a" style="left:1px;top:23px;width:11px;height:3px;background:#16e816"></div>
<div class="a" style="left:5px;top:24px;width:4px;height:1px;background:#333"></div>
</div>
<div id="bot" class="a"></div>
<svg class="a" style="left:30px;top:716px" width="1310" height="22">
<path d="M6.5 3.5 L13 10.5 L6.5 17.5" fill="none" stroke="#3a4a5a" stroke-width="2.6"/>
<path d="M6.5 3.5 L13 10.5 L6.5 17.5" fill="none" stroke="#eef2f6" stroke-width="0.9"/>
<path d="M1296 6.5 L1302.5 13 M1302.5 6.5 L1296 13" stroke="#1a1a1a" stroke-width="1.7"/>
</svg>
<div class="sep" style="left:1252px;top:745px;height:16px"></div>
<div class="st" style="left:1278px;transform:scaleX(0.85);transform-origin:0 0">1</div><div class="st" style="left:1290px">|</div><div class="st" style="left:1296px;transform:scaleX(0.85);transform-origin:0 0">1</div>
<div class="sep" style="left:1330px;top:745px;height:16px"></div>
<div class="st" style="left:1336px;letter-spacing:-0.6px;transform:scaleX(0.9);transform-origin:0 0">INS</div>
</body></html>
